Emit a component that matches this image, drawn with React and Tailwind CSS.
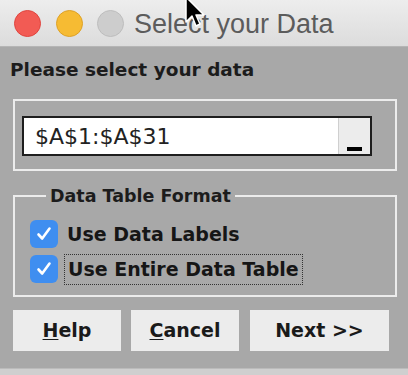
import React from "react";

const Check = () => (
  <div className="w-[28px] h-[28px] rounded-[6px] bg-[#3f8ef0] flex items-center justify-center shrink-0">
    <svg width="18" height="18" viewBox="0 0 18 18">
      <path
        d="M3.5 9.5 L7.2 13.5 L14.5 3.5"
        fill="none"
        stroke="white"
        strokeWidth="2.6"
        strokeLinecap="round"
        strokeLinejoin="round"
      />
    </svg>
  </div>
);

const Btn = ({ className, children }) => (
  <div
    className={
      "h-[41px] bg-[#ececec] flex items-center justify-center text-[19px] font-bold text-[#1a1a1a] " +
      className
    }
  >
    {children}
  </div>
);

export default function App() {
  return (
    <div className="relative w-[408px] h-[375px] flex flex-col overflow-hidden bg-[#a8a8a8] font-['DejaVu_Sans',sans-serif]">
      {/* title bar */}
      <div className="h-[47px] shrink-0 bg-gradient-to-b from-[#ededed] to-[#dcdcdc] border-b border-[#b5b5b5] flex items-center pl-[14px]">
        <div className="w-[27px] h-[27px] rounded-full bg-[#f25b54] border border-[#e0443e]" />
        <div className="w-[27px] h-[27px] rounded-full bg-[#f6bb33] border border-[#dea126] ml-[15px]" />
        <div className="w-[27px] h-[27px] rounded-full bg-[#cdcdcd] border border-[#bdbdbd] ml-[14px]" />
        <span className="ml-[10px] text-[27px] leading-none text-[#5c5c5c] font-['Liberation_Sans',sans-serif] mt-[2px]">
          Select your Data
        </span>
      </div>

      {/* mouse cursor */}
      <svg
        className="absolute left-[183px] top-[-4px]"
        width="24"
        height="34"
        viewBox="0 0 24 34"
      >
        <path
          d="M3 1 L3 26 L9 20 L13 30 L17 28 L13 19 L21 19 Z"
          fill="black"
          stroke="white"
          strokeWidth="1.5"
          strokeLinejoin="round"
        />
      </svg>

      {/* body */}
      <div className="flex-1 flex flex-col pt-[12px]">
        <div className="pl-[10px] text-[18.5px] leading-[22px] font-bold text-[#1c1c1c]">
          Please select your data
        </div>

        <div className="mt-[18px] ml-[13px] mr-[11px] h-[72px] border-2 border-[#ececec] pt-[15px] pl-[7px]">
          <div className="w-[350px] h-[40px] bg-white border-2 border-[#1e1e1e] flex">
            <div className="flex-1 flex items-center pl-[11px] text-[22px] text-[#222]">
              $A$1:$A$31
            </div>
            <div className="w-[32px] bg-[#ececec] border-l border-[#cfcfcf] flex items-end justify-center pb-[3px]">
              <div className="w-[15px] h-[4px] bg-black" />
            </div>
          </div>
        </div>

        <fieldset className="mt-[14px] ml-[13px] mr-[11px] border-2 border-[#ececec] pl-[15px] pb-[12px]">
          <legend className="ml-[16px] px-[4px] text-[17.5px] leading-[22px] font-bold text-[#1c1c1c]">
            Data Table Format
          </legend>
          <div className="flex flex-col gap-[7px] pt-[13px]">
            <div className="flex items-center h-[28px]">
              <Check />
              <span className="ml-[9px] text-[19px] font-bold text-[#161616]">
                Use Data Labels
              </span>
            </div>
            <div className="flex items-center h-[28px]">
              <Check />
              <span className="ml-[6px] px-[3px] h-[31px] flex items-center border border-dotted border-[#333] text-[19px] font-bold text-[#161616]">
                Use Entire Data Table
              </span>
            </div>
          </div>
        </fieldset>

        <div className="flex mt-[13px] ml-[13px] gap-[10px]">
          <Btn className="w-[108px]">
            <span>
              <span className="underline underline-offset-2">H</span>elp
            </span>
          </Btn>
          <Btn className="w-[108px]">
            <span>
              <span className="underline underline-offset-2">C</span>ancel
            </span>
          </Btn>
          <Btn className="w-[139px] ml-[1px]">Next &gt;&gt;</Btn>
        </div>
      </div>

      {/* bottom strip */}
      <div className="h-[7px] shrink-0 bg-[#cfcfcf] border-t border-[#bbbbbb]" />
    </div>
  );
}
